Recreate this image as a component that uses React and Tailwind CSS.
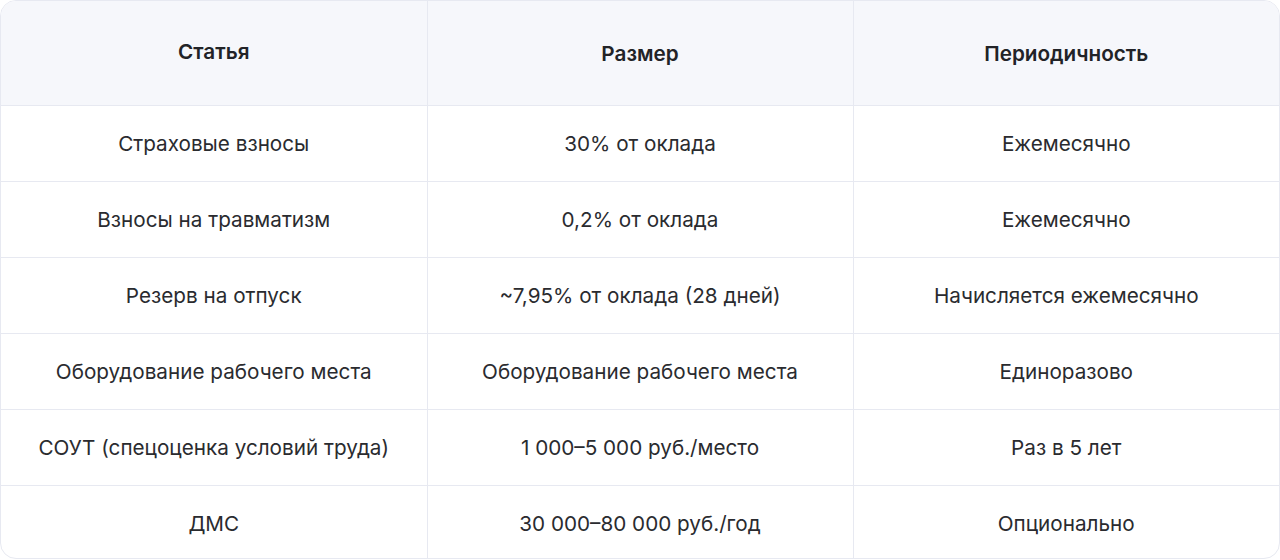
const headers = ["Статья", "Размер", "Периодичность"];

const rows = [
  ["Страховые взносы", "30% от оклада", "Ежемесячно"],
  ["Взносы на травматизм", "0,2% от оклада", "Ежемесячно"],
  ["Резерв на отпуск", "~7,95% от оклада (28 дней)", "Начисляется ежемесячно"],
  ["Оборудование рабочего места", "Оборудование рабочего места", "Единоразово"],
  ["СОУТ (спецоценка условий труда)", "1 000–5 000 руб./место", "Раз в 5 лет"],
  ["ДМС", "30 000–80 000 руб./год", "Опционально"],
];

export default function App() {
  return (
    <div className="w-[1280px] h-[560px] bg-white" style={{ fontFamily: "Inter, 'Noto Sans', sans-serif" }}>
      <div className="h-[559px] rounded-2xl border border-[#e7e9f1] overflow-hidden">
        <table className="w-full border-collapse table-fixed">
          <thead>
            <tr className="h-[104px] bg-[#f6f7fb]">
              {headers.map((h, i) => (
                <th
                  key={h}
                  className={`text-[20.7px] font-semibold text-[#222327] text-center border-b border-[#e7e9f1] ${i > 0 ? "border-l pt-0.5" : "pb-0.5"}`}
                >
                  {h}
                </th>
              ))}
            </tr>
          </thead>
          <tbody>
            {rows.map((r, ri) => (
              <tr key={ri} className={ri < rows.length - 1 ? "h-[76px]" : "h-[75px]"}>
                {r.map((c, ci) => (
                  <td
                    key={ci}
                    className={`text-[20.7px] text-[#2a2b2f] text-center pt-0.5 ${ri < rows.length - 1 ? "border-b" : ""} ${ci > 0 ? "border-l" : ""} border-[#e7e9f1]`}
                  >
                    {c}
                  </td>
                ))}
              </tr>
            ))}
          </tbody>
        </table>
      </div>
    </div>
  );
}
